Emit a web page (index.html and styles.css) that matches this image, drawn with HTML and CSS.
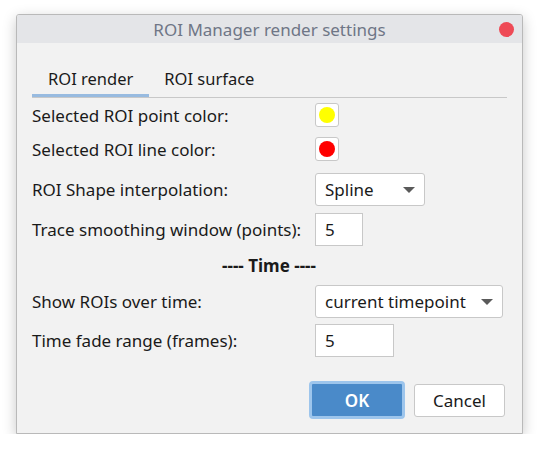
FILE: index.html
```html
<!DOCTYPE html>
<html>
<head>
<meta charset="utf-8">
<title>ROI Manager render settings</title>
<link rel="stylesheet" href="styles.css">
</head>
<body>
<div class="window">
  <div class="titlebar">
    <span class="title">ROI Manager render settings</span>
    <span class="close"></span>
  </div>
  <div class="content">
    <div class="tabs">
      <div class="tab active">ROI render</div>
      <div class="tab">ROI surface</div>
    </div>
    <div class="form">
      <div class="row r1">
        <span class="label">Selected ROI point color:</span>
        <span class="swatch"><span class="dot yellow"></span></span>
      </div>
      <div class="row r2">
        <span class="label">Selected ROI line color:</span>
        <span class="swatch"><span class="dot red"></span></span>
      </div>
      <div class="row r3">
        <span class="label">ROI Shape interpolation:</span>
        <span class="combo combo-short"><span>Spline</span><span class="arrow"></span></span>
      </div>
      <div class="row r4">
        <span class="label">Trace smoothing window (points):</span>
        <span class="field field-short">5</span>
      </div>
      <div class="section">---- Time ----</div>
      <div class="row r6">
        <span class="label">Show ROIs over time:</span>
        <span class="combo combo-long"><span>current timepoint</span><span class="arrow"></span></span>
      </div>
      <div class="row r7">
        <span class="label">Time fade range (frames):</span>
        <span class="field field-long">5</span>
      </div>
    </div>
    <div class="buttons">
      <button class="btn ok">OK</button>
      <button class="btn cancel">Cancel</button>
    </div>
  </div>
</div>
</body>
</html>
```

FILE: styles.css
```css
html, body {
  margin: 0;
  padding: 0;
  background: #ffffff;
}
body {
  padding: 14px 0 0 16px;
  font-family: "Noto Sans", "DejaVu Sans", sans-serif;
  font-size: 17px;
  color: #1a1a1a;
}
.window {
  width: 505px;
  height: 418px;
  border: 1px solid #b9b9b9;
  border-radius: 3px 3px 0 0;
  background: #f2f2f2;
  box-shadow: 0 4px 14px rgba(0, 0, 0, 0.22);
  display: flex;
  flex-direction: column;
  overflow: hidden;
}
.titlebar {
  height: 28px;
  background: #e4e5e8;
  display: flex;
  align-items: center;
  justify-content: center;
  position: relative;
  flex: none;
}
.title {
  color: #6f7686;
  font-size: 17px;
}
.close {
  position: absolute;
  right: 8px;
  top: 7px;
  width: 15px;
  height: 15px;
  border-radius: 50%;
  background: #ee4a56;
}
.content {
  padding: 0 15px 0 15px;
  display: flex;
  flex-direction: column;
  flex: 1;
}
.tabs {
  margin-top: 19px;
  display: flex;
  border-bottom: 1px solid #c8c8c8;
  height: 35px;
  font-size: 16.5px;
}
.tab {
  box-sizing: border-box;
  padding: 0 16px;
  display: flex;
  align-items: center;
  height: 35px;
  border-bottom: 3px solid transparent;
  color: #1a1a1a;
}
.tab.active {
  border-bottom-color: #98bbe0;
}
.tab + .tab {
  padding-left: 15px;
}
.form {
  display: flex;
  flex-direction: column;
}
.row {
  display: flex;
  align-items: center;
}
.label {
  width: 283px;
  flex: none;
}
.r1 { height: 24px; margin-top: 5px; }
.r2 { height: 24px; margin-top: 10px; }
.r3 { height: 33px; margin-top: 12px; }
.r4 { height: 33px; margin-top: 7px; }
.r6 { height: 33px; }
.r7 { height: 33px; margin-top: 6px; }
.section {
  height: 39px;
  display: flex;
  align-items: center;
  justify-content: center;
  font-weight: bold;
  padding-right: 1px;
}
.swatch {
  width: 22px;
  height: 22px;
  background: #ffffff;
  border: 1px solid #c8c8c8;
  border-radius: 3px;
  display: flex;
  align-items: center;
  justify-content: center;
}
.dot {
  width: 16px;
  height: 16px;
  border-radius: 50%;
}
.yellow { background: #ffff00; }
.red { background: #ff0000; }
.combo {
  box-sizing: border-box;
  height: 33px;
  background: #ffffff;
  border: 1px solid #c8c8c8;
  border-radius: 3px;
  display: flex;
  align-items: center;
  justify-content: space-between;
  padding: 0 9px 0 9px;
}
.combo-short { width: 110px; }
.combo-long { width: 188px; }
.arrow {
  width: 0;
  height: 0;
  border-left: 6px solid transparent;
  border-right: 6px solid transparent;
  border-top: 6px solid #5a5a5a;
}
.field {
  box-sizing: border-box;
  height: 33px;
  background: #ffffff;
  border: 1px solid #c8c8c8;
  display: flex;
  align-items: center;
  padding-left: 9px;
}
.field-short { width: 48px; }
.field-long { width: 79px; }
.buttons {
  display: flex;
  justify-content: flex-end;
  align-items: center;
  gap: 9px;
  margin-top: 24px;
  padding-right: 2px;
}
.btn {
  font-family: "Noto Sans", "DejaVu Sans", sans-serif;
  font-size: 17px;
  border-radius: 3px;
  box-sizing: border-box;
  margin: 0;
}
.ok {
  width: 96px;
  height: 38px;
  background: #4a8ac9;
  border: 3px solid #9dc5ec;
  color: #ffffff;
  font-weight: 600;
  border-radius: 4px;
}
.cancel {
  width: 91px;
  height: 33px;
  background: #ffffff;
  border: 1px solid #c8c8c8;
  color: #1a1a1a;
}
```
